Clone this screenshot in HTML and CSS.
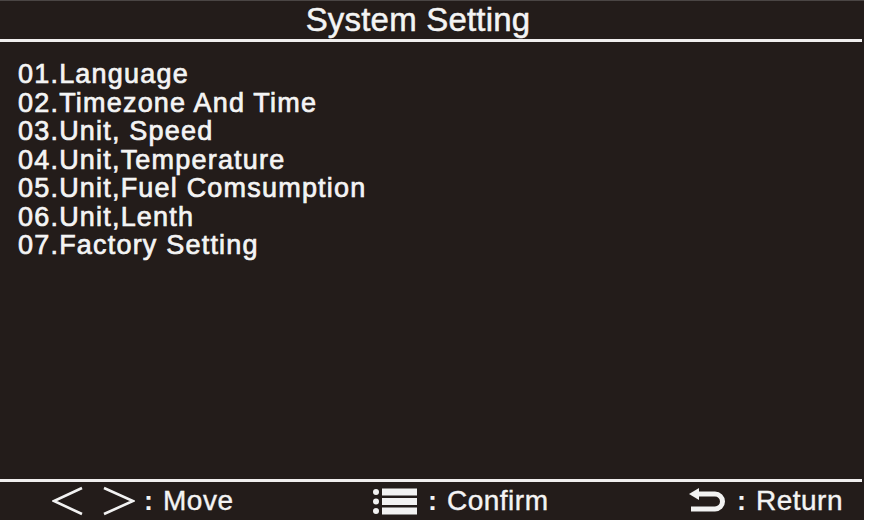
FILE: index.html
```html
<!DOCTYPE html>
<html>
<head>
<meta charset="utf-8">
<link rel="stylesheet" href="styles.css">
</head>
<body>
<div class="panel">
  <div class="header">System Setting</div>
  <div class="list">
    <div class="item">01.Language</div>
    <div class="item">02.Timezone And Time</div>
    <div class="item">03.Unit, Speed</div>
    <div class="item">04.Unit,Temperature</div>
    <div class="item">05.Unit,Fuel Comsumption</div>
    <div class="item">06.Unit,Lenth</div>
    <div class="item">07.Factory Setting</div>
  </div>
  <div class="footer">
    <div class="hint">
      <svg class="chev" width="32" height="30" viewBox="0 0 32 30"><polyline points="30,2 2,15 30,28" fill="none" stroke="#f2f2f2" stroke-width="2.6"/></svg>
      <svg class="chev chev-r" width="33" height="30" viewBox="0 0 33 30"><polyline points="2,2 31,15 2,28" fill="none" stroke="#f2f2f2" stroke-width="2.6"/></svg>
      <span class="colon">:</span>
      <span class="label">Move</span>
    </div>
    <div class="hint">
      <svg class="menu" width="46" height="27" viewBox="0 0 46 27">
        <circle cx="3" cy="4" r="3" fill="#f2f2f2"/>
        <circle cx="3" cy="13.5" r="3" fill="#f2f2f2"/>
        <circle cx="3" cy="23" r="3" fill="#f2f2f2"/>
        <rect x="9" y="0.5" width="35" height="7" fill="#f2f2f2"/>
        <rect x="9" y="10" width="35" height="7" fill="#f2f2f2"/>
        <rect x="9" y="19.5" width="35" height="7" fill="#f2f2f2"/>
      </svg>
      <span class="colon">:</span>
      <span class="label">Confirm</span>
    </div>
    <div class="hint">
      <svg class="ret" width="40" height="26" viewBox="0 0 40 26">
        <path d="M9 6 H27 A7.5 7.5 0 0 1 27 21 H3" fill="none" stroke="#f2f2f2" stroke-width="5"/>
        <polygon points="1,6 11,0 11,12" fill="#f2f2f2"/>
      </svg>
      <span class="colon">:</span>
      <span class="label">Return</span>
    </div>
  </div>
</div>
</body>
</html>
```
FILE: styles.css
```css
html, body {
  margin: 0;
  padding: 0;
  background: #ffffff;
}
body {
  width: 870px;
  height: 525px;
  overflow: hidden;
  font-family: "Liberation Sans", Arial, sans-serif;
}
.panel {
  width: 864px;
  height: 520px;
  background: #231c1a;
  display: flex;
  flex-direction: column;
  color: #f4f4f4;
  border-top: 1px solid #4a4544;
  box-sizing: border-box;
}
.header {
  height: 38px;
  border-bottom: 3px solid #f0eeee;
  margin-right: 2px;
  text-align: center;
  font-size: 33px;
  line-height: 38px;
  letter-spacing: 0.2px;
  padding-right: 26px;
  -webkit-text-stroke: 0.5px #f4f4f4;
}
.list {
  flex: 1;
  padding: 18px 0 0 18px;
}
.item {
  font-size: 27px;
  line-height: 28.5px;
  letter-spacing: 1.2px;
  -webkit-text-stroke: 0.7px #f4f4f4;
}
.footer {
  height: 38px;
  border-top: 3px solid #f0eeee;
  margin-right: 2px;
  display: flex;
  justify-content: space-between;
  align-items: center;
  padding: 0 19px 0 52px;
}
.hint {
  display: flex;
  align-items: center;
}
.chev-r {
  margin-left: 18px;
}
.colon {
  font-size: 27px;
  font-weight: bold;
  margin: 0 10px 0 9px;
}
.label {
  font-size: 28px;
  letter-spacing: 0.5px;
  -webkit-text-stroke: 0.4px #f4f4f4;
}
```
